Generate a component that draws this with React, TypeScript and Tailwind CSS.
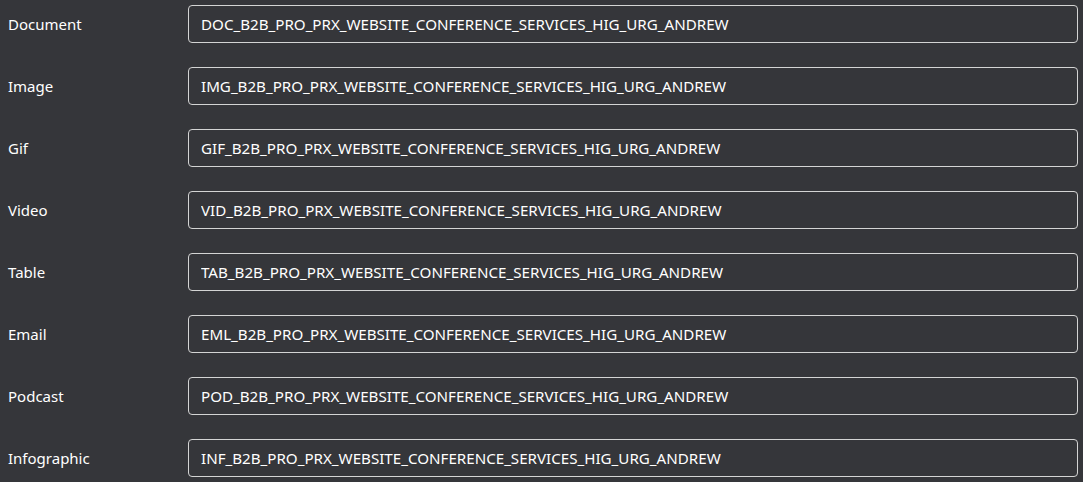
import React from 'react';

const rows = [
  ['Document', 'DOC'],
  ['Image', 'IMG'],
  ['Gif', 'GIF'],
  ['Video', 'VID'],
  ['Table', 'TAB'],
  ['Email', 'EML'],
  ['Podcast', 'POD'],
  ['Infographic', 'INF'],
];

export default function App() {
  return (
    <div className="min-h-screen bg-[#35363a] pl-2 pr-[5px] pt-[5px] font-['Noto_Sans',sans-serif] text-white">
      <div className="flex flex-col gap-6">
        {rows.map(([label, code]) => (
          <div key={code} className="flex items-center">
            <div className="w-[180px] shrink-0 text-[15px]">{label}</div>
            <input
              readOnly
              value={`${code}_B2B_PRO_PRX_WEBSITE_CONFERENCE_SERVICES_HIG_URG_ANDREW`}
              className="h-[38px] flex-1 rounded border border-[#d4d4d4] bg-transparent px-3 text-[15.15px] text-white outline-none"
            />
          </div>
        ))}
      </div>
    </div>
  );
}
